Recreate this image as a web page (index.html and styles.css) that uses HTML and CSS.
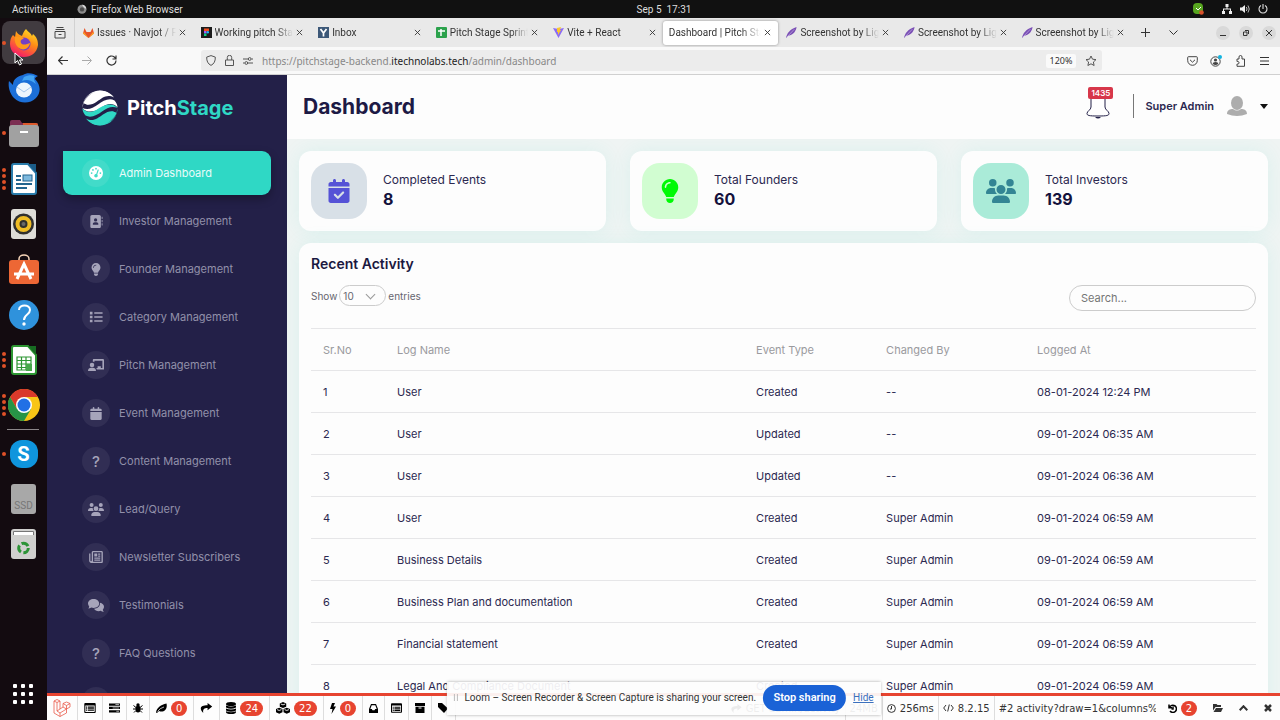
FILE: index.html
```html
<!DOCTYPE html>
<html lang="en">
<head>
    <meta charset="UTF-8">
    <meta name="viewport" content="width=device-width, initial-scale=1.0">
    <title>Dashboard | Pitch Stage</title>
    <link rel="stylesheet" href="styles.css">
</head>
<body>

    <!-- Shared icons -->
    <svg class="sprite" aria-hidden="true">
        <symbol id="users" viewBox="0 0 640 512"><path d="M144 0a80 80 0 1 1 0 160A80 80 0 1 1 144 0zM512 0a80 80 0 1 1 0 160A80 80 0 1 1 512 0zM0 298.7C0 239.8 47.8 192 106.7 192h42.7c15.9 0 31 3.5 44.6 9.7c-1.3 7.2-1.9 14.7-1.9 22.3c0 38.2 16.8 72.5 43.3 96H21.3C9.6 320 0 310.4 0 298.7zM405.3 320c26.6-23.5 43.3-57.8 43.3-96c0-7.6-.7-15-1.9-22.3c13.6-6.3 28.7-9.7 44.6-9.7h42.7C592.2 192 640 239.8 640 298.7c0 11.8-9.6 21.3-21.3 21.3H405.3zM224 224a96 96 0 1 1 192 0 96 96 0 1 1 -192 0zM128 485.3C128 411.7 187.7 352 261.3 352H378.7C452.3 352 512 411.7 512 485.3c0 14.7-11.9 26.7-26.7 26.7H154.7c-14.7 0-26.7-11.9-26.7-26.7z"/></symbol>
        <symbol id="bulb" viewBox="0 0 384 512"><path d="M272 384c9.6-31.9 29.5-59.1 49.2-86.2c5.2-7.1 10.4-14.2 15.4-21.4c19.8-28.5 31.4-63 31.4-100.3C368 78.8 289.2 0 192 0S16 78.8 16 176c0 37.3 11.6 71.9 31.4 100.3c5 7.2 10.2 14.3 15.4 21.4c19.8 27.1 39.7 54.4 49.2 86.2H272zM192 512c44.2 0 80-35.8 80-80V416H112v16c0 44.2 35.8 80 80 80zM112 176c0 8.8-7.2 16-16 16s-16-7.2-16-16c0-61.9 50.1-112 112-112c8.8 0 16 7.2 16 16s-7.2 16-16 16c-44.2 0-80 35.8-80 80z"/></symbol>
        <symbol id="calendar-check" viewBox="0 0 448 512"><path d="M128 0c17.7 0 32 14.3 32 32V64H288V32c0-17.7 14.3-32 32-32s32 14.3 32 32V64h48c26.5 0 48 21.5 48 48v48H0V112C0 85.5 21.5 64 48 64H96V32c0-17.7 14.3-32 32-32zM0 192H448V464c0 26.5-21.5 48-48 48H48c-26.5 0-48-21.5-48-48V192zM329 305c9.4-9.4 9.4-24.6 0-33.9s-24.6-9.4-33.9 0l-95 95-47-47c-9.4-9.4-24.6-9.4-33.9 0s-9.4 24.6 0 33.9l64 64c9.4 9.4 24.6 9.4 33.9 0L329 305z"/></symbol>
        <symbol id="calendar" viewBox="0 0 448 512"><path d="M96 32V64H48C21.500 64 0 85.500 0 112v48H448V112c0-26.500-21.500-48-48-48H352V32c0-17.700-14.300-32-32-32s-32 14.300-32 32V64H160V32c0-17.700-14.300-32-32-32S96 14.300 96 32zM448 192H0V464c0 26.500 21.500 48 48 48H400c26.500 0 48-21.500 48-48V192z"/></symbol>
        <symbol id="address-book" viewBox="0 0 512 512"><path d="M96 0C60.700 0 32 28.700 32 64V448c0 35.300 28.700 64 64 64H384c35.300 0 64-28.700 64-64V64c0-35.300-28.700-64-64-64H96zM208 288h64c44.200 0 80 35.800 80 80c0 8.800-7.200 16-16 16H144c-8.800 0-16-7.200-16-16c0-44.200 35.800-80 80-80zm-32-96a64 64 0 1 1 128 0 64 64 0 1 1 -128 0zM512 80c0-8.800-7.200-16-16-16s-16 7.200-16 16v64c0 8.800 7.200 16 16 16s16-7.200 16-16V80zM496 192c-8.800 0-16 7.200-16 16v64c0 8.800 7.200 16 16 16s16-7.200 16-16V208c0-8.800-7.200-16-16-16zm16 144c0-8.800-7.200-16-16-16s-16 7.200-16 16v64c0 8.800 7.200 16 16 16s16-7.200 16-16V336z"/></symbol>
        <symbol id="list" viewBox="0 0 16 16"><path d="M1 2h3v3H1zM1 6.500h3v3H1zM1 11h3v3H1zM6 2.700h9.500v1.700H6zM6 7.200h9.500v1.700H6zM6 11.700h9.500v1.700H6z"/></symbol>
        <symbol id="teacher" viewBox="0 0 20 16"><circle cx="5" cy="7.500" r="2.800"/><path d="M0 15c0-3 1.800-4.200 4-4.200h2c2.200 0 4 1.200 4 4.200zM6 3V1.500C6 .7 6.600 0 7.500 0h11c.8 0 1.500.7 1.500 1.500V13H11c0-.8-.3-1.500-.7-2H12V9h4v2h2V2H8v2c-.6-.5-1.300-.8-2-1z"/></symbol>
        <symbol id="gauge" viewBox="0 0 512 512"><path fill-rule="evenodd" d="M0 256a256 256 0 1 1 512 0A256 256 0 1 1 0 256zM288 96a32 32 0 1 0-64 0 32 32 0 1 0 64 0zM256 416c35 0 64-29 64-64 0-17-7-33-18-45l53-154c4-11-1-23-12-27s-23 1-27 12l-53 154c-36 0-71 25-71 60 0 35 29 64 64 64zM176 144a32 32 0 1 0-64 0 32 32 0 1 0 64 0zM96 288a32 32 0 1 0 0-64 32 32 0 1 0 0 64zM448 256a32 32 0 1 0-64 0 32 32 0 1 0 64 0z"/></symbol>
        <symbol id="news" viewBox="0 0 16 14"><path fill-rule="evenodd" d="M5 0h9.500C15.300 0 16 .7 16 1.500v11c0 .8-.7 1.500-1.500 1.500h-12C1.100 14 0 12.900 0 11.500V3h1.500v8.500a.8.800 0 0 0 1.500 0V1.500C3 .7 3.900 0 5 0zM4.600 1.600v10.800h9.800V1.600zM6 3h3.500v3.500H6zM10.500 3H13v1.300h-2.500zM10.500 5.300H13v1.300h-2.500zM6 7.600h7v1.300H6zM6 10h7v1.300H6z"/></symbol>
        <symbol id="chat" viewBox="0 0 20 16"><path d="M7 0c3.900 0 7 2.400 7 5.500S10.900 11 7 11c-1 0-2-.2-2.900-.5C3 11.300 1.700 11.700.3 11.700c.6-.7 1-1.600 1.200-2.600C.6 8.100 0 6.900 0 5.500 0 2.400 3.100 0 7 0z"/><path d="M15 4.600c2.900.4 5 2.500 5 5.100 0 1.400-.6 2.600-1.500 3.500.2 1 .7 2 1.400 2.700-1.500 0-2.900-.6-3.900-1.300-3.500 1.200-7.200-.2-8.400-2.600 4.300-.2 7.700-3 7.400-7.400z"/></symbol>
        <symbol id="close" viewBox="0 0 8 8"><path d="M1 1l6 6M7 1L1 7" fill="none" stroke="currentColor"/></symbol>
        <symbol id="feather" viewBox="0 0 12 12"><path fill="#7a4fb5" d="M0 12C1 7 4 2.500 11.500 0 11 4 8.500 8.500 2.500 9.500z"/><path stroke="#d9c8f0" stroke-width=".6" d="M1 11L9 2.500"/></symbol>
        <symbol id="window" viewBox="0 0 16 14"><path fill-rule="evenodd" d="M1.500 0h13C15.300 0 16 .7 16 1.500v11c0 .8-.7 1.500-1.500 1.500h-13C.7 14 0 13.300 0 12.500v-11C0 .7.700 0 1.500 0zM1.500 3.500v9h13v-9zM2.500 5H4v1.500H2.500zM5 5h8.500v1.500H5zM2.500 7.500H4V9H2.500zM5 7.500h8.500V9H5zM2.500 10H4v1.200H2.500zM5 10h8.500v1.200H5z"/></symbol>
        <symbol id="share" viewBox="0 0 16 14"><path d="M9.500 0L16 5l-6.500 5V7C5 7 2.500 8.500 3.500 14 .5 11 0 9 0 7.500 0 4.500 3.500 3 9.500 3z"/></symbol>
        <symbol id="swoosh" viewBox="0 0 36 36">
            <path d="M.5 18A17.500 17.500 0 0 1 32 7.500C25 3.500 20 8 15 11.500S5 16 2 13C2 10 9 3 17 2 10 1.500 3 7 1.500 13z"/>
            <path d="M1.500 13C6 16 10 13 14 10S24 3 30 6A16 16 0 0 0 6 6.500 17 17 0 0 0 1.500 13z"/>
            <path d="M.5 18C6 20.500 11 18 16 14.500S27 7.500 32.500 10.500C34.500 13 35.500 15 35.500 17.500 31 12.500 25 13.500 19.500 17.500S5 24 .5 18z"/>
        </symbol>
    </svg>

    <!-- Desktop top bar -->
    <header class="topbar">
        <button class="topbar-item">Activities</button>
        <button class="topbar-item topbar-app">
            <svg width="10" height="10" viewBox="0 0 12 12"><circle cx="6" cy="6.300" r="5.400" fill="#8d8d8d"/><path d="M6 1c3 0 5 2 5 5L8 4z" fill="#ddd"/><circle cx="6" cy="6.500" r="2.600" fill="#4c4c4c"/></svg>
            Firefox Web Browser
        </button>
        <time class="clock">Sep 5&nbsp; 17:31</time>
        <div class="tray">
            <svg width="12" height="12" viewBox="0 0 12 12"><rect x="1" width="10" height="11" rx="4" fill="#57a51f"/><path d="M4 5l2 2 3-3" stroke="#fff" fill="none"/><circle cx="9.500" cy="9.500" r="2.300" fill="#d8502a"/></svg>
            <svg width="10" height="10" viewBox="0 0 10 10" fill="#eee"><path d="M3.500 0h3v3h-1v1.500H9V7h1v3H7V7h1V5.500H2V7h1v3H0V7h1V4.500h3.500V3h-1z"/></svg>
            <svg width="10" height="10" viewBox="0 0 10 10" fill="#eee"><path d="M0 3.500h2L5 1v8L2 6.500H0z"/><path d="M6.300 3q1.500 2 0 4M8 1.500q2.500 3.500 0 7" fill="none" stroke="#ccc" stroke-width=".9"/></svg>
            <svg width="10" height="10" viewBox="0 0 10 10" fill="none" stroke="#ddd" stroke-width="1.100"><path d="M5 0v5M3 1.500a4 4 0 1 0 4 0"/></svg>
        </div>
    </header>

    <div class="desktop">

        <!-- Dock -->
        <nav class="dock" aria-label="Dock">
            <div class="dock-apps">
                <button class="app current" aria-label="Firefox"><span class="dots"><i></i></span>
                    <svg width="30" height="30" viewBox="0 0 30 30"><defs><linearGradient id="fx" x1=".8" y1="0" x2=".3" y2="1"><stop offset="0" stop-color="#ffe226"/><stop offset=".45" stop-color="#ff8b16"/><stop offset="1" stop-color="#f5156c"/></linearGradient></defs><path fill="url(#fx)" d="M17 1c2 3 5 4 6 7l1-2c4 3 5 7 5 11-1 8-7 12-14 12S1 24 1 16c0-4 1-7 3-9l2 2 1-6c1 2 3 4 6 5 1-3 2-5 4-7z"/><circle cx="15" cy="16" r="6.500" fill="#7440c4"/><path fill="#ff9a1c" d="M6 9c4-1 7 0 9 2-3 0-4 2-3 4 2 3 6 1 9 0-1 6-7 8-11 5-3-2-5-7-4-11z"/></svg>
                </button>
                <button class="app" aria-label="Thunderbird">
                    <svg width="32" height="32" viewBox="0 0 32 32"><path fill="#1c6fd8" d="M15 3c4-3 10-2 15 1-2 1-3 2-3 3 6 6 6 14 1 19-6 6-16 6-22 0C1 21 0 13 1 9l4 4c0-4 2-8 10-10z"/><path fill="#43a4f2" d="M16 5c4-2 8-2 11-1-2 2-1 4 1 8-5-4-9-5-14-3z"/><ellipse cx="16" cy="18" rx="8" ry="7.500" fill="#eef5fd"/><path d="M9 15l7 5 7-5" fill="none" stroke="#a8c7ec"/></svg>
                </button>
                <button class="app" aria-label="Files"><span class="dots"><i></i></span>
                    <svg width="30" height="28" viewBox="0 0 30 28"><path fill="#7c2e52" d="M1 3a2 2 0 0 1 2-2h8l2 3h14a2 2 0 0 1 2 2v8H1z"/><path fill="#dd5a2b" d="M14 4h13a2 2 0 0 1 2 2v8H14z"/><rect y="6" width="30" height="22" rx="3" fill="#a1a1a1"/><rect x="11" y="12" width="8" height="2" fill="#fff"/></svg>
                </button>
                <button class="app" aria-label="Writer"><span class="dots"><i></i><i></i><i></i><i></i></span>
                    <svg width="26" height="32" viewBox="0 0 26 32"><path fill="#fff" stroke="#2a7cab" stroke-width="2" d="M3 1h14l8 9v19a2 2 0 0 1-2 2H3a2 2 0 0 1-2-2V3a2 2 0 0 1 2-2z"/><path fill="#1b5c87" d="M17 1h8v9z"/><path stroke="#23658f" stroke-width="2" d="M5 13h5M5 17h5M5 21h16M5 25h11"/><rect x="12" y="12" width="9" height="6" fill="#7db9de" stroke="#23658f"/></svg>
                </button>
                <button class="app" aria-label="Rhythmbox">
                    <svg width="25" height="30" viewBox="0 0 25 30"><rect width="25" height="30" rx="3" fill="#deddd8"/><circle cx="12.500" cy="15" r="10.500" fill="#30302e"/><circle cx="12.500" cy="15" r="6" fill="none" stroke="#efbd25" stroke-width="4"/><circle cx="12.500" cy="15" r="2" fill="#686868"/></svg>
                </button>
                <button class="app" aria-label="Software">
                    <svg width="30" height="30" viewBox="0 0 30 30"><path d="M10 8V5a5 4 0 0 1 10 0v3" fill="none" stroke="#f7d5b8" stroke-width="1.500"/><rect y="6" width="30" height="24" rx="3" fill="#ed6735"/><path d="M8 25l7-15 7 15M5 20h20" fill="none" stroke="#fff" stroke-width="3"/></svg>
                </button>
                <button class="app" aria-label="Help">
                    <svg width="30" height="30" viewBox="0 0 30 30"><circle cx="15" cy="15" r="15" fill="#2f92dc"/><path d="M10 10c0-6 11-6 11 0 0 5-6 4-6 10" fill="none" stroke="#fff" stroke-width="2"/><circle cx="15" cy="24" r="1.700" fill="#fff"/></svg>
                </button>
                <button class="app" aria-label="Calc"><span class="dots"><i></i><i></i><i></i></span>
                    <svg width="26" height="30" viewBox="0 0 26 30"><path fill="#fff" stroke="#2d9632" stroke-width="2" d="M3 1h14l8 9v17a2 2 0 0 1-2 2H3a2 2 0 0 1-2-2V3a2 2 0 0 1 2-2z"/><path fill="#176b22" d="M17 1h8v9z"/><path fill="none" stroke="#2d9632" stroke-width="1.200" d="M6 12h14v13H6zM6 15.500h14M6 19h14M6 22.500h14M10.500 12v13M15 12v13"/><rect x="15" y="19" width="6" height="7" fill="#47a84a"/></svg>
                </button>
                <button class="app" aria-label="Chrome"><span class="dots"><i></i><i></i><i></i><i></i></span>
                    <svg width="32" height="32" viewBox="0 0 32 32"><circle cx="16" cy="16" r="16" fill="#f8c516"/><path fill="#d93a2b" d="M2.100 8A16 16 0 0 1 29.900 8H16l-7 12z"/><path fill="#279447" d="M2.100 8A16 16 0 0 0 16 32l7-12-14 0z"/><circle cx="16" cy="16" r="8" fill="#fff"/><circle cx="16" cy="16" r="6.500" fill="#2270e5"/></svg>
                </button>
            </div>
            <hr class="dock-line">
            <div class="dock-apps dock-devices">
                <button class="app" aria-label="Skype"><span class="dots"><i></i></span>
                    <span class="skype">S</span>
                </button>
                <button class="app" aria-label="SSD"><span class="drive">SSD</span></button>
                <button class="app" aria-label="Trash">
                    <svg width="25" height="30" viewBox="0 0 25 30"><rect width="25" height="30" rx="3" fill="#d0d0ce"/><path fill="#fff" stroke="#777" d="M2.500 6V2.500h20V6"/><circle cx="12.500" cy="19" r="4.800" fill="none" stroke="#2c9436" stroke-width="3" stroke-dasharray="7.500 2.500"/></svg>
                </button>
            </div>
            <button class="app-grid" aria-label="Show Applications"><i></i><i></i><i></i><i></i><i></i><i></i><i></i><i></i><i></i></button>
            <svg class="cursor" width="10" height="14" viewBox="0 0 10 14"><path d="M1 1v10l2.500-2.500L5.500 13l2-1-2-4H9z" fill="#222" stroke="#fff"/></svg>
        </nav>

        <div class="browser">

            <!-- Tabs -->
            <div class="tabbar">
                <button class="recent-tabs" aria-label="Recent browsing"><svg width="12" height="12" viewBox="0 0 12 12" fill="none" stroke="#444"><path d="M2.500.5h7M1.500 2.500h9M1 4.500h10v6.500H1zM4.500 7.500h3"/></svg></button>
                <div class="tabs" role="tablist">
                    <div class="tab" role="tab"><svg width="11" height="10" viewBox="0 0 11 10"><path fill="#e8562a" d="M1.500 0L3.500 4h4l2-4L11 5.500 5.500 10 0 5.500z"/><path fill="#fca326" d="M0 5.500L1 4l4.500 6zM11 5.500L10 4l-4.500 6z"/></svg><span>Issues · Navjot / P</span><button aria-label="Close tab"><svg width="7" height="7"><use href="#close"/></svg></button></div>
                    <div class="tab" role="tab"><svg width="11" height="11" viewBox="0 0 11 11"><path fill="#1c1c1c" d="M0 0h11v11H0z"/><path fill="#f24e1e" d="M3 1.500h5v2.500H3z"/><path fill="#a259ff" d="M3 4h2.500v2.500H3z"/><circle cx="6.800" cy="5.200" r="1.200" fill="#1abcfe"/><path fill="#0acf83" d="M3 6.500h2.500V9H3z"/></svg><span>Working pitch Sta</span><button aria-label="Close tab"><svg width="7" height="7"><use href="#close"/></svg></button></div>
                    <div class="tab" role="tab"><svg width="11" height="11" viewBox="0 0 11 11"><path fill="#3c5878" d="M0 0h11v11H0z"/><path d="M2.500 2l3 4 3-4M5.500 6v3.500" fill="none" stroke="#fff" stroke-width="1.700"/></svg><span>Inbox</span><button aria-label="Close tab"><svg width="7" height="7"><use href="#close"/></svg></button></div>
                    <div class="tab" role="tab"><svg width="11" height="11" viewBox="0 0 11 11"><rect width="11" height="11" rx="1" fill="#2ba24c"/><path d="M2 4h7M5 2v7" stroke="#fff" stroke-width="1.500"/></svg><span>Pitch Stage Sprint</span><button aria-label="Close tab"><svg width="7" height="7"><use href="#close"/></svg></button></div>
                    <div class="tab" role="tab"><svg width="11" height="11" viewBox="0 0 11 11"><path fill="#8c6cf5" d="M0 1l5.500 10L11 1 5.500 2z"/><path fill="#fbc62c" d="M4 1l4-1-1 3h1L5 8V5H4z"/></svg><span>Vite + React</span><button aria-label="Close tab"><svg width="7" height="7"><use href="#close"/></svg></button></div>
                    <div class="tab active" role="tab" aria-selected="true"><span>Dashboard | Pitch Sta</span><button aria-label="Close tab"><svg width="7" height="7"><use href="#close"/></svg></button></div>
                    <div class="tab" role="tab"><svg width="11" height="11"><use href="#feather"/></svg><span>Screenshot by Lig</span><button aria-label="Close tab"><svg width="7" height="7"><use href="#close"/></svg></button></div>
                    <div class="tab" role="tab"><svg width="11" height="11"><use href="#feather"/></svg><span>Screenshot by Lig</span><button aria-label="Close tab"><svg width="7" height="7"><use href="#close"/></svg></button></div>
                    <div class="tab" role="tab"><svg width="11" height="11"><use href="#feather"/></svg><span>Screenshot by Lig</span><button aria-label="Close tab"><svg width="7" height="7"><use href="#close"/></svg></button></div>
                </div>
                <button class="tool" aria-label="New tab"><svg width="9" height="9" viewBox="0 0 9 9" stroke="#333"><path d="M4.500 0v9M0 4.500h9"/></svg></button>
                <button class="tool" aria-label="List all tabs"><svg width="9" height="6" viewBox="0 0 9 6" stroke="#333" fill="none"><path d="M.5.500l4 4 4-4"/></svg></button>
                <div class="window-buttons">
                    <button aria-label="Minimize"><svg width="6" height="8" viewBox="0 0 6 8" stroke="#333"><path d="M0 6.500h6"/></svg></button>
                    <button aria-label="Restore"><svg width="6" height="6" viewBox="0 0 6 6" stroke="#333" fill="none"><path d="M.5 2h3.500v3.500H.5zM2 .5h3.500V4"/></svg></button>
                    <button aria-label="Close"><svg width="8" height="8"><use href="#close"/></svg></button>
                </div>
            </div>

            <!-- Address bar -->
            <div class="navbar">
                <button class="tool" aria-label="Back"><svg width="10" height="9" viewBox="0 0 10 9" fill="none" stroke="#333" stroke-width="1.200"><path d="M10 4.500H1M4.500.5l-4 4 4 4"/></svg></button>
                <button class="tool" aria-label="Forward" disabled><svg width="10" height="9" viewBox="0 0 10 9" fill="none" stroke="#aaa"><path d="M0 4.500h9M5.500.5l4 4-4 4"/></svg></button>
                <button class="tool" aria-label="Reload"><svg width="11" height="11" viewBox="0 0 11 11" fill="none" stroke="#333" stroke-width="1.200"><path d="M10 5.500A4.500 4.500 0 1 1 8.300 2L10 3.800M10 .5v3.500H6.500"/></svg></button>
                <div class="spacer"></div>
                <div class="urlbar">
                    <svg width="10" height="11" viewBox="0 0 10 11" fill="none" stroke="#555"><path d="M5 .6l4.300 1.500C9.500 6 8 9 5 10.400 2 9 .5 6 .7 2.100z"/></svg>
                    <svg width="9" height="11" viewBox="0 0 9 11" fill="none" stroke="#555"><path d="M.5 5h8v5.500h-8zM2.300 5V2.500a2.200 2.200 0 0 1 4.400 0V5"/></svg>
                    <svg width="10" height="8" viewBox="0 0 10 8" fill="none" stroke="#555"><path d="M0 2h5M8.500 2H10M0 6h1.500M5 6h5"/><circle cx="6.700" cy="2" r="1.400"/><circle cx="3.300" cy="6" r="1.400"/></svg>
                    <div class="url" role="textbox" tabindex="0" aria-label="Address">https://pitchstage-backend.<b>itechnolabs.tech</b>/admin/dashboard</div>
                    <button class="zoom">120%</button>
                    <button class="star" aria-label="Bookmark"><svg width="12" height="12" viewBox="0 0 12 12" fill="none" stroke="#555"><path d="M6 1l1.500 3.200 3.500.4-2.600 2.400.7 3.500L6 8.800l-3.100 1.700.7-3.500L1 4.600l3.500-.4z"/></svg></button>
                </div>
                <div class="spacer"></div>
                <button class="tool" aria-label="Pocket"><svg width="11" height="10" viewBox="0 0 11 10" fill="none" stroke="#444"><path d="M1.500.7h8q.8 0 .8.800V4.500a4.800 4.800 0 0 1-9.600 0V1.500q0-.8.800-.8zM3 3.800l2.500 2.400L8 3.800"/></svg></button>
                <button class="tool" aria-label="Account"><svg width="12" height="12" viewBox="0 0 12 12"><circle cx="5.500" cy="6.500" r="4.700" fill="none" stroke="#444"/><circle cx="5.500" cy="5" r="1.600" fill="#444"/><path d="M2.700 9q0-2 2.800-2t2.800 2q-2.800 2-5.600 0z" fill="#444"/><circle cx="10" cy="2" r="2" fill="#12b4e0"/></svg></button>
                <button class="tool" aria-label="Extensions"><svg width="11" height="12" viewBox="0 0 11 12" fill="none" stroke="#444"><path d="M2 4h2V2a1.500 1.500 0 0 1 3 0v2h2.500v7.300H2V9h.8a1.200 1.200 0 0 0 0-2.500H2z"/></svg></button>
                <button class="tool" aria-label="Menu"><svg width="9" height="8" viewBox="0 0 9 8" stroke="#333"><path d="M0 .5h9M0 4h9M0 7.500h9"/></svg></button>
            </div>

            <div class="page">

                <!-- Sidebar -->
                <aside class="sidebar">
                    <a class="logo" href="#">
                        <svg width="36" height="36" viewBox="0 0 36 36"><use href="#swoosh" width="36" height="36" fill="#fff"/><use href="#swoosh" width="36" height="36" fill="#2fd8c5" transform="rotate(180 18 18)"/></svg>
                        <span>Pitch<em>Stage</em></span>
                    </a>
                    <nav class="menu">
                        <a class="menu-item active" href="#"><i><svg width="14" height="14"><use href="#gauge"/></svg></i>Admin Dashboard</a>
                        <a class="menu-item" href="#"><i><svg width="14" height="13"><use href="#address-book"/></svg></i>Investor Management</a>
                        <a class="menu-item" href="#"><i><svg width="12" height="13"><use href="#bulb"/></svg></i>Founder Management</a>
                        <a class="menu-item" href="#"><i><svg width="14" height="14"><use href="#list"/></svg></i>Category Management</a>
                        <a class="menu-item" href="#"><i><svg width="16" height="13"><use href="#teacher"/></svg></i>Pitch Management</a>
                        <a class="menu-item" href="#"><i><svg width="12" height="13"><use href="#calendar"/></svg></i>Event Management</a>
                        <a class="menu-item" href="#"><i>?</i>Content Management</a>
                        <a class="menu-item" href="#"><i><svg width="16" height="13"><use href="#users"/></svg></i>Lead/Query</a>
                        <a class="menu-item" href="#"><i><svg width="14" height="12"><use href="#news"/></svg></i>Newsletter Subscribers</a>
                        <a class="menu-item" href="#"><i><svg width="16" height="13"><use href="#chat"/></svg></i>Testimonials</a>
                        <a class="menu-item" href="#"><i>?</i>FAQ Questions</a>
                        <a class="menu-item" href="#"><i></i></a>
                    </nav>
                </aside>

                <main class="main">
                    <div class="page-header">
                        <h1>Dashboard</h1>
                        <button class="bell" aria-label="Notifications">
                            <svg width="24" height="26" viewBox="0 0 24 26"><path fill="#fff" stroke="#232048" d="M5 5c0-6 14-6 14 0v9c0 3 4 4 4 6.500 0 2-2 2.500-11 2.500S1 22.500 1 20.500C1 18 5 17 5 14z"/><path fill="#232048" d="M9 24h6q-3 3-6 0z"/></svg>
                            <span class="badge">1435</span>
                        </button>
                        <button class="profile">
                            Super Admin
                            <svg width="20" height="20" viewBox="0 0 20 20" fill="#adadad"><ellipse cx="10" cy="7" rx="6" ry="7"/><path d="M0 18c0-4 3-5 6-5q4 3 8 0c3 0 6 1 6 5q-10 4-20 0z"/></svg>
                            <span class="caret"></span>
                        </button>
                    </div>

                    <div class="content">
                        <section class="stats">
                            <div class="stat">
                                <div class="stat-icon events"><svg width="24" height="24"><use href="#calendar-check"/></svg></div>
                                <div class="stat-text"><p>Completed Events</p><strong>8</strong></div>
                            </div>
                            <div class="stat">
                                <div class="stat-icon founders"><svg width="24" height="24"><use href="#bulb"/></svg></div>
                                <div class="stat-text"><p>Total Founders</p><strong>60</strong></div>
                            </div>
                            <div class="stat">
                                <div class="stat-icon investors"><svg width="30" height="24"><use href="#users"/></svg></div>
                                <div class="stat-text"><p>Total Investors</p><strong>139</strong></div>
                            </div>
                        </section>

                        <section class="activity">
                            <h2>Recent Activity</h2>
                            <div class="table-tools">
                                <label class="length">Show
                                    <span class="select-wrap"><select><option>10</option><option>25</option><option>50</option></select></span>
                                    entries
                                </label>
                                <input class="search" type="search" placeholder="Search..." aria-label="Search">
                            </div>
                            <table>
                                <thead>
                                    <tr><th class="col-no">Sr.No</th><th class="col-name">Log Name</th><th class="col-type">Event Type</th><th class="col-by">Changed By</th><th>Logged At</th></tr>
                                </thead>
                                <tbody>
                                    <tr><td>1</td><td>User</td><td>Created</td><td>--</td><td>08-01-2024 12:24 PM</td></tr>
                                    <tr><td>2</td><td>User</td><td>Updated</td><td>--</td><td>09-01-2024 06:35 AM</td></tr>
                                    <tr><td>3</td><td>User</td><td>Updated</td><td>--</td><td>09-01-2024 06:36 AM</td></tr>
                                    <tr><td>4</td><td>User</td><td>Created</td><td>Super Admin</td><td>09-01-2024 06:59 AM</td></tr>
                                    <tr><td>5</td><td>Business Details</td><td>Created</td><td>Super Admin</td><td>09-01-2024 06:59 AM</td></tr>
                                    <tr><td>6</td><td>Business Plan and documentation</td><td>Created</td><td>Super Admin</td><td>09-01-2024 06:59 AM</td></tr>
                                    <tr><td>7</td><td>Financial statement</td><td>Created</td><td>Super Admin</td><td>09-01-2024 06:59 AM</td></tr>
                                    <tr><td>8</td><td>Legal And Compliance Document</td><td>Created</td><td>Super Admin</td><td>09-01-2024 06:59 AM</td></tr>
                                </tbody>
                            </table>
                        </section>
                    </div>
                </main>
            </div>

            <!-- Laravel debug bar -->
            <footer class="debugbar">
                <button aria-label="Debugbar"><svg width="18" height="18" viewBox="0 0 18 18" fill="none" stroke="#ea5a4b" stroke-width=".8"><path d="M1 2l3-1.500L7 2v8l3-2V4.500L13.500 3 17 4.500V8l-3.500 2v4L7 17.500 1 14zM1 2l3 1.500L7 2M4 3.500V12l3 2 6.500-4M10 4.500l3.500 2L17 4.500M13.500 6.500V10L10 8M7 10l-3 2M7 14v3.500"/></svg></button>
                <button aria-label="Messages"><svg width="12" height="10"><use href="#window"/></svg></button>
                <button aria-label="Timeline"><svg width="11" height="10" viewBox="0 0 12 10"><path d="M0 0h12v2.500H0zM0 3.700h12v2.500H0zM0 7.400h12v2.500H0z"/><path d="M7 1.200h4M4 5h7M8 8.600h3" stroke="#fff" stroke-width=".7"/></svg></button>
                <button aria-label="Exceptions"><svg width="10" height="10" viewBox="0 0 10 10"><ellipse cx="5" cy="6" rx="2.500" ry="3.500"/><circle cx="5" cy="2" r="1.700"/><path d="M.5 2.500L3 4.500M9.500 2.500L7 4.500M0 6h10M1 9.500l2-2M9 9.500l-2-2" stroke="#000"/></svg></button>
                <button>
                    <svg width="11" height="10" viewBox="0 0 11 10"><path d="M0 9.500C1 4 5 2 10.500.5 12 7 7 10 3 8L1 10z"/><path d="M1.500 8.500Q4 5 8 4" fill="none" stroke="#fff" stroke-width=".7"/></svg><span class="count">0</span>
                </button>
                <button aria-label="Route"><svg width="13" height="10"><use href="#share"/></svg></button>
                <button><svg width="10" height="12" viewBox="0 0 10 12"><ellipse cx="5" cy="2" rx="5" ry="2"/><path d="M0 3.500q5 2 10 0v2q-5 2.500-10 0zM0 6.500q5 2 10 0v2q-5 2.500-10 0zM0 9.300q5 2 10 0V10q0 2-5 2t-5-2z"/></svg><span class="count">24</span></button>
                <button><svg width="14" height="12" viewBox="0 0 13 11"><path d="M6.500 0l3 1.300v3l-3 1.300-3-1.300v-3zM3 5.200l3 1.300v3L3 10.900 0 9.500v-3zM10 5.200l3 1.300v3l-3 1.400-3-1.400v-3z"/><path d="M4.500 1.800l2 .8 2-.8M1 7l2 .8L5 7M8 7l2 .8 2-.8" fill="none" stroke="#fff" stroke-width=".8"/></svg><span class="count">22</span></button>
                <button><svg width="6" height="11" viewBox="0 0 6 11"><path d="M2 0h3L3.500 3.500H6L1.500 11 2.500 6H0z"/></svg><span class="count">0</span></button>
                <button aria-label="Mails"><svg width="9" height="9" viewBox="0 0 9 9"><path fill-rule="evenodd" d="M2 0h5l2 5v4H0V5zM2.700 1.200L1.300 5h1.500l.7 1.300h2L6.200 5h1.500L6.300 1.200z"/></svg></button>
                <button aria-label="Gate"><svg width="11" height="10"><use href="#window"/></svg></button>
                <button aria-label="Session"><svg width="10" height="10" viewBox="0 0 10 10"><path fill-rule="evenodd" d="M0 0h10v3H0zM.5 3.700h9V10h-9zM3.500 4.500v1h3v-1z"/></svg></button>
                <button aria-label="Request"><svg width="11" height="10" viewBox="0 0 11 10"><path d="M0 0h4l6 5.500L6 10 0 4z"/></svg></button>
                <span class="debug-info debug-route"><svg width="11" height="9"><use href="#share"/></svg>GET admin/activity</span>
                <span class="debug-info">24MB</span>
                <span class="debug-info"><svg width="9" height="9" viewBox="0 0 9 9" fill="none" stroke="#333"><circle cx="4.500" cy="4.500" r="3.900"/><path d="M4.500 2v3H3"/></svg>256ms</span>
                <span class="debug-info"><svg width="11" height="8" viewBox="0 0 11 8" fill="none" stroke="#333"><path d="M3 1L.7 4 3 7M8 1l2.300 3L8 7M6.300.5l-1.600 7"/></svg>8.2.15</span>
                <select class="debug-select" aria-label="Requests"><option>#2 activity?draw=1&amp;columns%</option></select>
                <button class="debug-tool"><svg width="9" height="9" viewBox="0 0 9 9" fill="none" stroke="#000" stroke-width="1.500"><path d="M1.500 3.500A3.600 3.600 0 1 1 2 7M1 .5v3.300h3M5 2.500V5H3.500"/></svg><span class="count">2</span></button>
                <button class="debug-tool" aria-label="Open"><svg width="10" height="8" viewBox="0 0 10 8" fill="#333"><path d="M0 0h3.500l1 1H8v2H2.500L0 6.500zM3 4h7L8 8H.5z"/></svg></button>
                <button class="debug-tool" aria-label="Minimize debugbar"><svg width="9" height="6" viewBox="0 0 9 6" fill="none" stroke="#333" stroke-width="2"><path d="M.7 5.200l3.800-4 3.800 4"/></svg></button>
                <button class="debug-tool" aria-label="Close debugbar"><svg width="8" height="8" viewBox="0 0 8 8" stroke="#333" stroke-width="2.500"><path d="M1 1l6 6M7 1L1 7"/></svg></button>
            </footer>

            <!-- Screen sharing notice -->
            <div class="sharing">
                <span class="grip"></span>
                <span class="sharing-text">Loom – Screen Recorder &amp; Screen Capture is sharing your screen.</span>
                <button class="stop">Stop sharing</button>
                <a href="#">Hide</a>
            </div>
        </div>
    </div>

</body>
</html>
```
FILE: styles.css
```css
* {
    box-sizing: border-box;
}

body {
    margin: 0;
    height: 100vh;
    display: flex;
    flex-direction: column;
    overflow: hidden;
    font-family: Roboto, sans-serif;
    font-size: 10px;
    background-color: #130b10;
}

button {
    padding: 0;
    border: none;
    background: none;
    color: inherit;
    font: inherit;
    display: flex;
    align-items: center;
    justify-content: center;
}

h1, h2, p {
    margin: 0;
}

.sprite {
    display: none;
}

svg {
    flex: none;
}

/* Top bar */
.topbar {
    height: 18px;
    flex: none;
    display: flex;
    align-items: center;
    gap: 24px;
    padding: 0 12px;
    background-color: #111;
    color: #dedede;
    position: relative;
}

.topbar-app {
    gap: 4px;
}

.clock {
    position: absolute;
    left: 50%;
    transform: translateX(-50%);
    margin-left: 24px;
}

.tray {
    display: flex;
    align-items: center;
    gap: 8px;
    margin-left: auto;
}

.tray svg:first-child {
    margin-right: 10px;
}

.desktop {
    flex: 1;
    min-height: 0;
    display: flex;
}

/* Dock */
.dock {
    width: 47px;
    flex: none;
    position: relative;
    display: flex;
    flex-direction: column;
    padding-top: 2px;
}

.dock-apps {
    height: 408px;
    display: flex;
    flex-direction: column;
}

.dock-devices {
    height: 136px;
}

.app {
    flex: 1;
    margin: 1px 2px;
    border-radius: 8px;
    position: relative;
}

.app.current {
    background-color: #413b40;
}

.dots {
    position: absolute;
    left: 0;
    top: 0;
    bottom: 0;
    display: flex;
    flex-direction: column;
    justify-content: center;
    gap: 2px;
}

.dots i {
    width: 4px;
    height: 4px;
    border-radius: 50%;
    background-color: #df5128;
}

.dock-line {
    width: 32px;
    margin: 1px auto 1px 7px;
    border: none;
    border-top: 1px solid #8c8789;
}

.skype {
    width: 28px;
    height: 28px;
    border-radius: 12px;
    background-color: #0f95dd;
    color: #fff;
    font-size: 20px;
    line-height: 28px;
    font-weight: 700;
}

.drive {
    width: 25px;
    height: 30px;
    padding-top: 14px;
    border-radius: 3px;
    background-color: #a8a8a8;
    color: #777;
    line-height: 16px;
    text-align: center;
}

.app-grid {
    width: 22px;
    display: grid;
    grid-template-columns: repeat(3, 4px);
    gap: 4px;
    margin: auto auto 16px 13px;
    justify-content: start;
}

.app-grid i {
    height: 4px;
    border-radius: 1px;
    background-color: #fff;
}

.cursor {
    position: absolute;
    left: 14px;
    top: 34px;
}

/* Browser chrome */
.browser {
    flex: 1;
    min-width: 0;
    display: flex;
    flex-direction: column;
    position: relative;
    background-color: #fdfdfd;
}

.tabbar {
    height: 29px;
    flex: none;
    display: flex;
    align-items: center;
    padding-right: 4px;
    background-color: #e9e9e9;
    color: #333;
}

.recent-tabs {
    width: 28px;
    height: 29px;
    border-right: 1px solid #d2d2d2;
    padding-right: 2px;
}

.tabs {
    display: flex;
    flex: 0 1 1056px;
    min-width: 0;
}

.tab {
    flex: 1 1 0;
    min-width: 0;
    height: 24px;
    display: flex;
    align-items: center;
    gap: 3px;
    padding: 0 7px 0 8px;
    border-radius: 3px;
}

.tab span {
    flex: 1;
    overflow: hidden;
    white-space: nowrap;
    mask-image: linear-gradient(to right, #000 78%, transparent);
}

.tab.active {
    background-color: #fff;
    padding-left: 6px;
    box-shadow: 0 0 3px rgba(0, 0, 0, 0.4);
}

.tool {
    width: 24px;
    height: 24px;
}

.tabbar .tool {
    width: 28px;
}

.window-buttons {
    display: flex;
    gap: 9px;
    margin-left: auto;
}

.window-buttons button {
    width: 14px;
    height: 14px;
    border-radius: 50%;
    background-color: #d9d9d9;
}

.navbar {
    height: 28px;
    flex: none;
    display: flex;
    align-items: center;
    padding: 0 4px;
    border-bottom: 1px solid #d0d0d0;
    background-color: #f9f9f9;
}

.spacer {
    flex: 0 1 78px;
}

.urlbar {
    flex: 1;
    min-width: 0;
    height: 21px;
    display: flex;
    align-items: center;
    gap: 9px;
    padding: 0 5px;
    border-radius: 3px;
    background-color: #ececec;
    font-family: "Noto Sans", sans-serif;
}

.url {
    flex: 1;
    color: #888;
    white-space: nowrap;
    overflow: hidden;
}

.url b {
    font-weight: 400;
    color: #222;
}

.zoom {
    width: 30px;
    height: 14px;
    border-radius: 2px;
    background-color: #fafafa;
    color: #333;
    font-size: 9px;
}

/* Application */
.page {
    flex: 1;
    min-height: 0;
    display: flex;
    overflow: hidden;
    font-family: Inter, sans-serif;
    font-size: 11px;
    color: #2b2850;
}

.sidebar {
    width: 240px;
    flex: none;
    background-color: #232048;
}

.logo {
    display: flex;
    align-items: center;
    gap: 9px;
    height: 72px;
    padding: 0 0 6px 35px;
    color: #fff;
    font-size: 20px;
    font-weight: 700;
    text-decoration: none;
}

.logo em {
    font-style: normal;
    color: #2fd8c5;
}

.menu {
    padding: 0 16px;
}

.menu-item {
    height: 44px;
    margin: 4px 0;
    padding-left: 19px;
    display: flex;
    align-items: center;
    gap: 9px;
    border-radius: 9px;
    color: #9290aa;
    text-decoration: none;
}

.menu-item i {
    width: 28px;
    height: 28px;
    display: flex;
    align-items: center;
    justify-content: center;
    border-radius: 50%;
    background-color: #312e54;
    color: #a6a4ba;
    font-style: normal;
    font-size: 15px;
    font-weight: 500;
}

.menu-item svg {
    fill: currentColor;
}

.menu-item.active {
    border-top-left-radius: 0;
    background-color: #2fd8c5;
    color: #e9fbf9;
    box-shadow: 0 4px 10px rgba(0, 0, 0, 0.3);
}

.menu-item.active i {
    background-color: #42dbc9;
    color: #fff;
}

.main {
    flex: 1;
    min-width: 0;
    display: flex;
    flex-direction: column;
    background-color: #eff4f3;
}

.page-header {
    height: 64px;
    flex: none;
    display: flex;
    align-items: center;
    padding: 0 12px 2px 16px;
    background-color: #fdfdfd;
    position: relative;
}

.page-header h1 {
    margin-right: auto;
    font-size: 21px;
    font-weight: 700;
    color: #1d1a45;
}

.bell {
    position: relative;
    margin-right: 23px;
}

.badge {
    position: absolute;
    top: -6px;
    left: 2px;
    width: 25px;
    height: 12px;
    border-radius: 2px;
    background-color: #d7374a;
    color: #fff;
    font-size: 8px;
    line-height: 12px;
    font-weight: 600;
}

.profile {
    height: 24px;
    gap: 13px;
    padding-left: 11px;
    border-left: 1px solid #777;
    font-weight: 600;
}

.caret {
    border: 4px solid transparent;
    border-top: 5px solid #111;
    border-bottom: none;
}

.content {
    padding: 12px;
    display: flex;
    flex-direction: column;
    gap: 12px;
}

.stats {
    display: grid;
    grid-template-columns: repeat(3, 1fr);
    gap: 24px;
}

.stat, .activity {
    border-radius: 12px;
    background-color: #fdfdfd;
    box-shadow: 0 0 20px rgba(47, 216, 197, 0.1);
}

.stat {
    display: flex;
    align-items: center;
    gap: 16px;
    padding: 12px;
}

.stat-icon {
    width: 56px;
    height: 56px;
    display: flex;
    align-items: center;
    justify-content: center;
    border-radius: 18px;
}

.stat-icon svg {
    fill: currentColor;
}

.events {
    background-color: #d8e0e7;
    color: #5552d6;
}

.founders {
    background-color: #d1fdd1;
    color: #00fa05;
}

.investors {
    background-color: #aaebd8;
    color: #338594;
}

.stat-text {
    padding-bottom: 2px;
}

.stat p {
    font-size: 12px;
    line-height: 18px;
}

.stat strong {
    display: block;
    font-size: 16px;
    line-height: 20px;
    color: #14113c;
}

.activity {
    padding: 12px 12px 40px;
}

.activity h2 {
    font-size: 14px;
    line-height: 18px;
    font-weight: 600;
    color: #1b1840;
}

.table-tools {
    display: flex;
    align-items: flex-start;
    justify-content: space-between;
    margin: 12px 0 17px;
}

.length {
    display: flex;
    align-items: center;
    gap: 2px;
    font-size: 10px;
    color: #66656f;
}

.select-wrap {
    position: relative;
}

.select-wrap::after {
    content: "";
    position: absolute;
    right: 12px;
    top: 6px;
    width: 6px;
    height: 6px;
    border: solid #999;
    border-width: 0 1px 1px 0;
    transform: rotate(45deg);
}

.length select {
    display: block;
    width: 47px;
    height: 21px;
    padding: 0 3px;
    appearance: none;
    border: 1px solid #ccc;
    border-radius: 11px;
    background-color: transparent;
    color: #66656f;
    font: 10px Inter, sans-serif;
}

.search {
    width: 187px;
    height: 26px;
    padding: 0 11px;
    border: 1px solid #ccc;
    border-radius: 13px;
    background-color: transparent;
    font: 11px Inter, sans-serif;
}

.search::placeholder {
    color: #757575;
}

table {
    width: 100%;
    table-layout: fixed;
    border-collapse: collapse;
}

th, td {
    height: 42px;
    padding: 0 12px;
    border-bottom: 1px solid #e6e6e8;
    text-align: left;
}

th {
    border-top: 1px solid #e6e6e8;
    color: #9a9a9e;
    font-weight: 400;
}

.col-no {
    width: 74px;
}

.col-name {
    width: 38%;
}

.col-type {
    width: 130px;
}

.col-by {
    width: 151px;
}

/* Debug bar */
.debugbar {
    height: 27px;
    flex: none;
    display: flex;
    border-top: 3px solid #e74430;
    background-color: #fdfdfd;
    color: #333;
    font-family: "DejaVu Sans", sans-serif;
    font-size: 10px;
    white-space: nowrap;
}

.debugbar button {
    padding: 0 6px;
    gap: 4px;
    border-right: 1px solid #ddd;
}

.count {
    padding: 0 5px;
    border-radius: 8px;
    background-color: #e74430;
    color: #fff;
    line-height: 15px;
}

.debug-info {
    display: flex;
    align-items: center;
    gap: 4px;
    padding: 0 4px;
    border-right: 1px solid #ddd;
}

.debug-route {
    margin-left: auto;
}

.debug-select {
    width: 165px;
    padding: 0 4px;
    appearance: none;
    border: none;
    background: none;
    color: #333;
    font: inherit;
}

.debugbar .debug-tool {
    padding: 0 8px;
    border: none;
}

/* Screen sharing notice */
.sharing {
    position: absolute;
    left: 50%;
    bottom: 5px;
    transform: translateX(-50%);
    height: 33px;
    display: flex;
    align-items: center;
    gap: 7px;
    padding: 0 7px 2px;
    background-color: rgba(253, 253, 253, 0.93);
    box-shadow: 0 0 3px rgba(0, 0, 0, 0.35);
    color: #333;
    white-space: nowrap;
}

.grip {
    width: 4px;
    height: 7px;
    border: solid #bbb;
    border-width: 0 1px;
}

.stop {
    width: 83px;
    height: 26px;
    flex: none;
    border-radius: 13px;
    background-color: #1a62d6;
    color: #fff;
    font-size: 11px;
    font-weight: 600;
}

.sharing a {
    color: #3b70bd;
}
```
